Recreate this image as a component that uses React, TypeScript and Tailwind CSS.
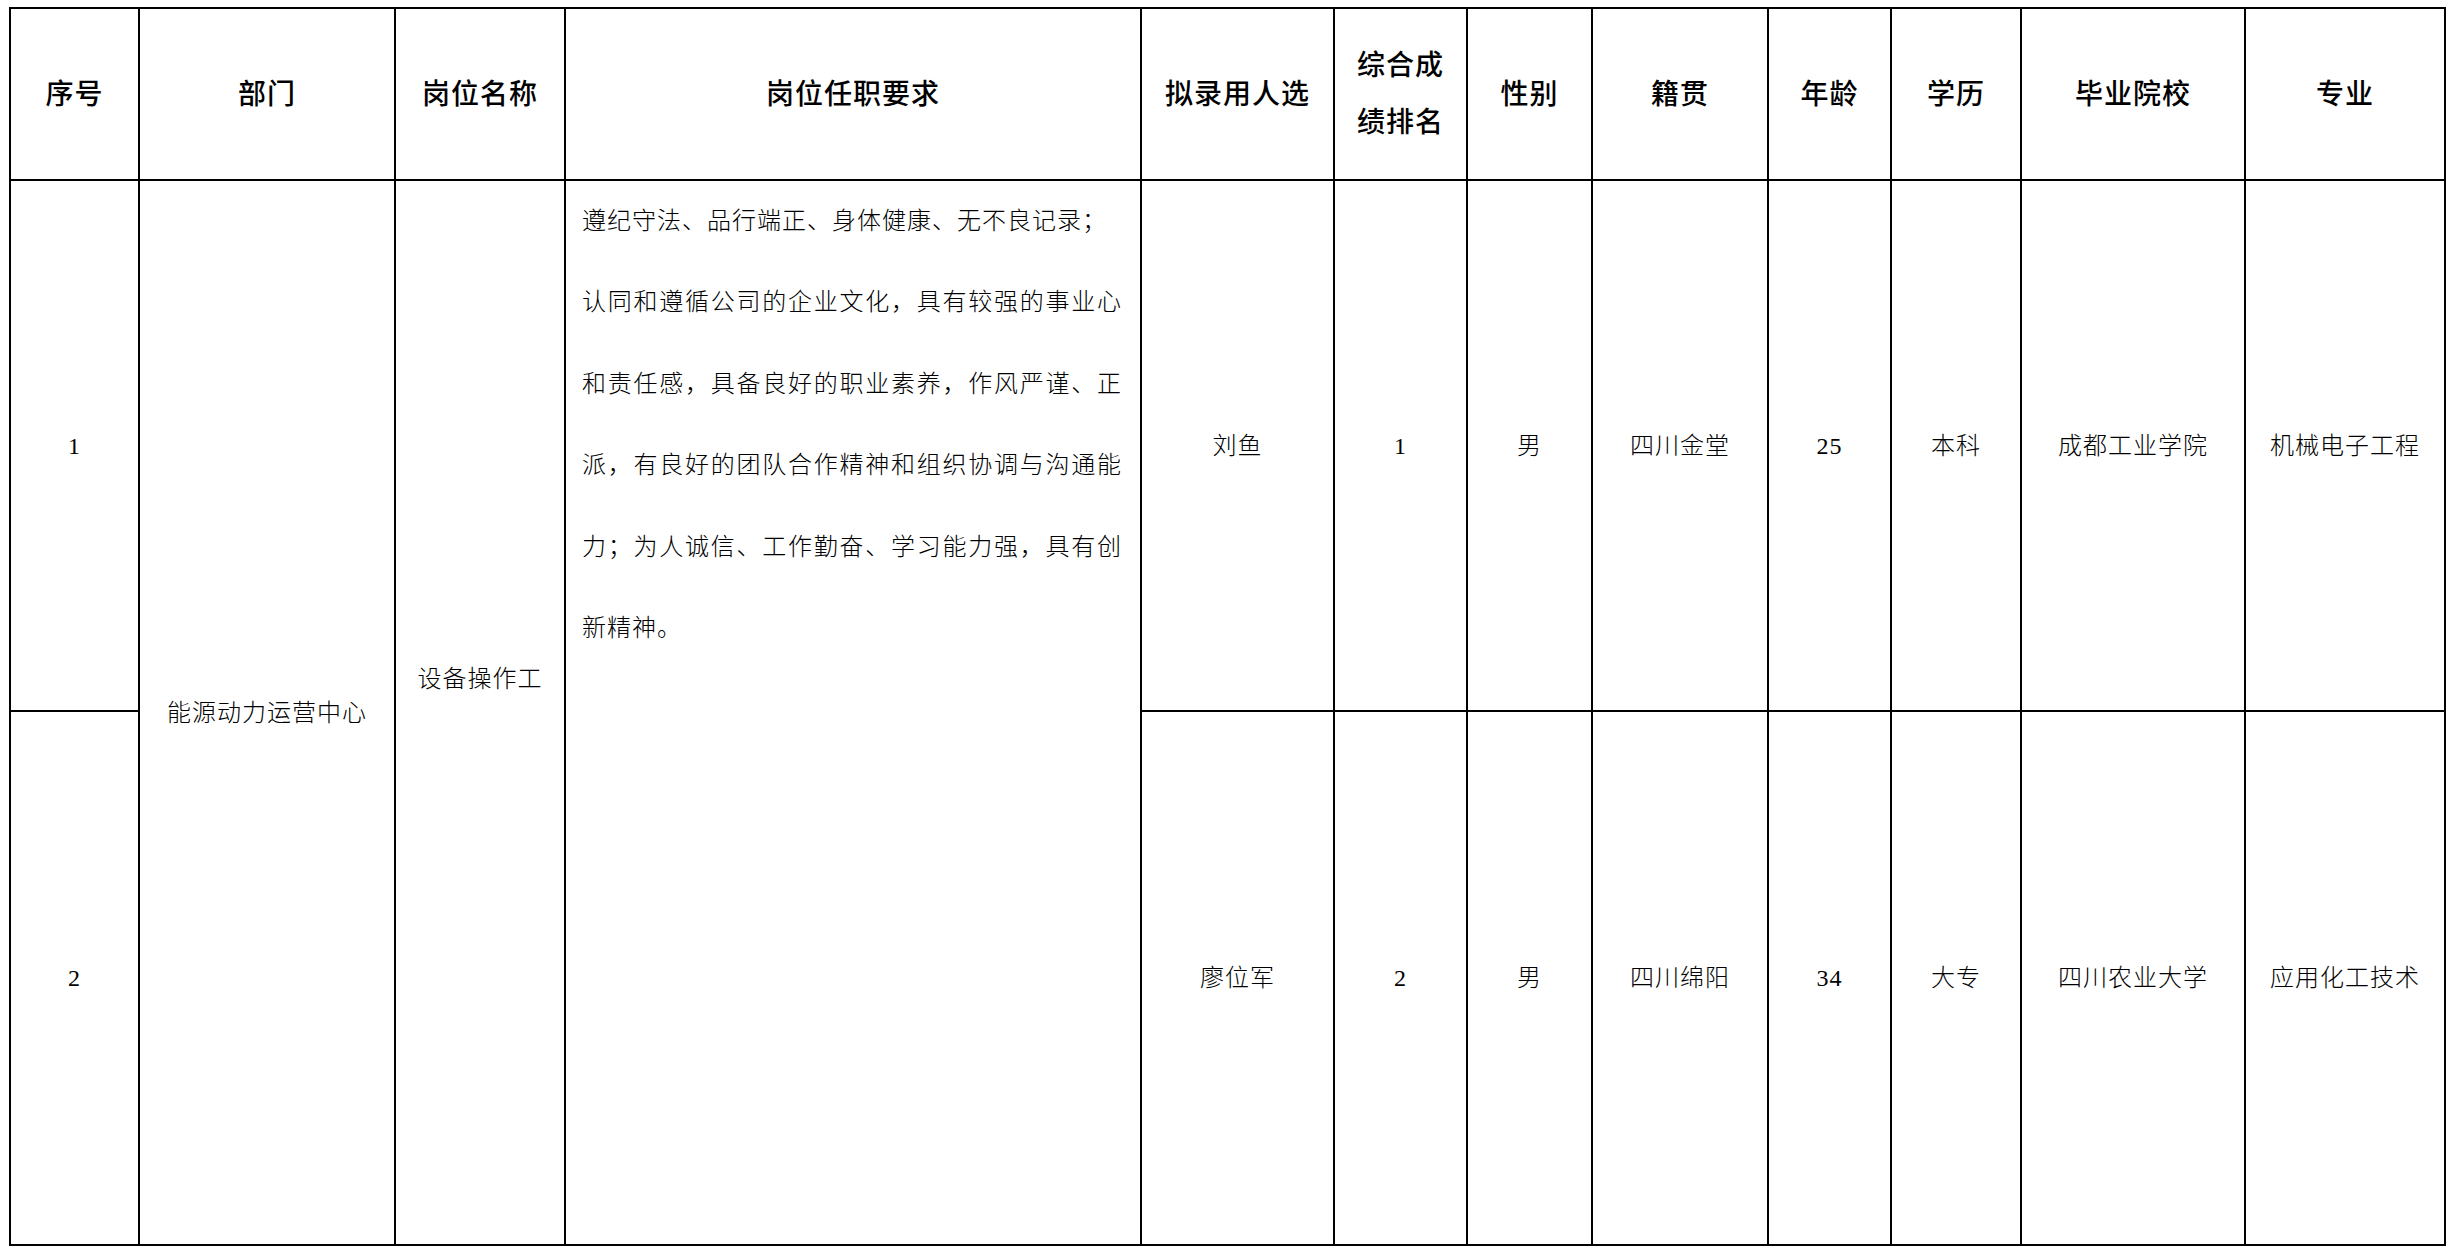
import React from 'react';

const headers = ['序号', '部门', '岗位名称', '岗位任职要求', '拟录用人选', null, '性别', '籍贯', '年龄', '学历', '毕业院校', '专业'];

const widths = [129, 256, 170, 576, 193, 133, 125, 176, 123, 130, 224, 200];

const people = [
  { no: '1', name: '刘鱼', rank: '1', sex: '男', home: '四川金堂', age: '25', edu: '本科', school: '成都工业学院', major: '机械电子工程' },
  { no: '2', name: '廖位军', rank: '2', sex: '男', home: '四川绵阳', age: '34', edu: '大专', school: '四川农业大学', major: '应用化工技术' },
];

const reqLines = [
  '认同和遵循公司的企业文化，具有较强的事业心',
  '和责任感，具备良好的职业素养，作风严谨、正',
  '派，有良好的团队合作精神和组织协调与沟通能',
  '力；为人诚信、工作勤奋、学习能力强，具有创',
];

export default function App() {
  const cell = 'border-2 border-black text-center align-middle p-0';
  return (
    <div className="w-[2457px] h-[1255px] bg-white pl-[9px] pt-[7px] text-black font-['Liberation_Serif','Noto_Sans_CJK_SC',serif]">
      <table className="table-fixed border-collapse w-[2437px]">
        <colgroup>
          {widths.map((w, i) => (
            <col key={i} style={{ width: w }} />
          ))}
        </colgroup>
        <thead>
          <tr className="h-[172px]">
            {headers.map((h, i) => (
              <th key={i} className={`${cell} text-[28px] font-medium tracking-[1px] leading-[57px]`}>
                {h ?? (
                  <>
                    综合成
                    <br />
                    绩排名
                  </>
                )}
              </th>
            ))}
          </tr>
        </thead>
        <tbody className="text-[24px] font-light tracking-[1px]">
          {people.map((p, i) => (
            <tr key={p.no} className={i === 0 ? 'h-[531px]' : 'h-[534px]'}>
              <td className={cell}>{p.no}</td>
              {i === 0 && (
                <>
                  <td rowSpan={2} className={cell}>能源动力运营中心</td>
                  <td rowSpan={2} className={`${cell} pb-[68px]`}>设备操作工</td>
                  <td rowSpan={2} className="border-2 border-black align-top text-left pl-[16px] pr-[18px] pt-0 leading-[81.4px]">
                    <div>遵纪守法、品行端正、身体健康、无不良记录；</div>
                    {reqLines.map((l) => (
                      <div key={l} className="text-justify [text-align-last:justify]">
                        {l}
                      </div>
                    ))}
                    <div>新精神。</div>
                  </td>
                </>
              )}
              <td className={cell}>{p.name}</td>
              <td className={cell}>{p.rank}</td>
              <td className={cell}>{p.sex}</td>
              <td className={cell}>{p.home}</td>
              <td className={cell}>{p.age}</td>
              <td className={cell}>{p.edu}</td>
              <td className={cell}>{p.school}</td>
              <td className={cell}>{p.major}</td>
            </tr>
          ))}
        </tbody>
      </table>
    </div>
  );
}
